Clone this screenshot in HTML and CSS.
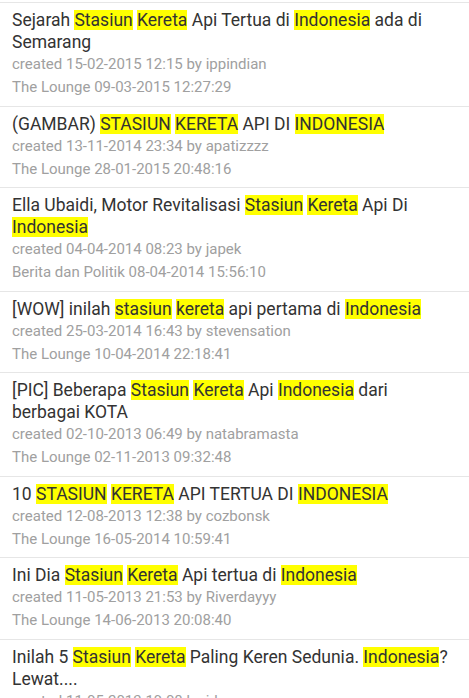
FILE: index.html
```html
<!DOCTYPE html>
<html>
<head>
<meta charset="utf-8">
<link rel="stylesheet" href="styles.css">
</head>
<body>
<ul class="list">
  <li class="item">
    <div class="title">Sejarah <span class="hl">Stasiun</span> <span class="hl">Kereta</span> Api Tertua di <span class="hl">Indonesia</span> ada di Semarang</div>
    <div class="meta">created 15-02-2015 12:15 by ippindian</div>
    <div class="meta">The Lounge 09-03-2015 12:27:29</div>
  </li>
  <li class="item">
    <div class="title">(GAMBAR) <span class="hl">STASIUN</span> <span class="hl">KERETA</span> API DI <span class="hl">INDONESIA</span></div>
    <div class="meta">created 13-11-2014 23:34 by apatizzzz</div>
    <div class="meta">The Lounge 28-01-2015 20:48:16</div>
  </li>
  <li class="item">
    <div class="title">Ella Ubaidi, Motor Revitalisasi <span class="hl">Stasiun</span> <span class="hl">Kereta</span> Api Di <span class="hl">Indonesia</span></div>
    <div class="meta">created 04-04-2014 08:23 by japek</div>
    <div class="meta">Berita dan Politik 08-04-2014 15:56:10</div>
  </li>
  <li class="item">
    <div class="title">[WOW] inilah <span class="hl">stasiun</span> <span class="hl">kereta</span> api pertama di <span class="hl">Indonesia</span></div>
    <div class="meta">created 25-03-2014 16:43 by stevensation</div>
    <div class="meta">The Lounge 10-04-2014 22:18:41</div>
  </li>
  <li class="item">
    <div class="title">[PIC] Beberapa <span class="hl">Stasiun</span> <span class="hl">Kereta</span> Api <span class="hl">Indonesia</span> dari berbagai KOTA</div>
    <div class="meta">created 02-10-2013 06:49 by natabramasta</div>
    <div class="meta">The Lounge 02-11-2013 09:32:48</div>
  </li>
  <li class="item">
    <div class="title">10 <span class="hl">STASIUN</span> <span class="hl">KERETA</span> API TERTUA DI <span class="hl">INDONESIA</span></div>
    <div class="meta">created 12-08-2013 12:38 by cozbonsk</div>
    <div class="meta">The Lounge 16-05-2014 10:59:41</div>
  </li>
  <li class="item">
    <div class="title">Ini Dia <span class="hl">Stasiun</span> <span class="hl">Kereta</span> Api tertua di <span class="hl">Indonesia</span></div>
    <div class="meta">created 11-05-2013 21:53 by Riverdayyy</div>
    <div class="meta">The Lounge 14-06-2013 20:08:40</div>
  </li>
  <li class="item">
    <div class="title">Inilah 5 <span class="hl">Stasiun</span> <span class="hl">Kereta</span> Paling Keren Sedunia. <span class="hl">Indonesia</span>? Lewat....</div>
    <div class="meta">created 11-05-2013 19:08 by idoo</div>
    <div class="meta">The Lounge 14-06-2013 20:08:40</div>
  </li>
</ul>
</body>
</html>
```
FILE: styles.css
```css
html, body {
  margin: 0;
  padding: 0;
  background: #ffffff;
}
body {
  font-family: Roboto, "Liberation Sans", sans-serif;
  overflow: hidden;
}
.list {
  list-style: none;
  margin: 2px 0 0 0;
  padding: 0;
  border-top: 1px solid #e6e6e6;
}
.item {
  padding: 6px 12px 6.5px 12px;
  border-bottom: 1px solid #e6e6e6;
}
.title {
  font-size: 17.5px;
  line-height: 22px;
  color: #333333;
}
.hl {
  background: #ffff00;
}
.meta {
  font-size: 15px;
  line-height: 23px;
  color: #a0a0a0;
}
```
